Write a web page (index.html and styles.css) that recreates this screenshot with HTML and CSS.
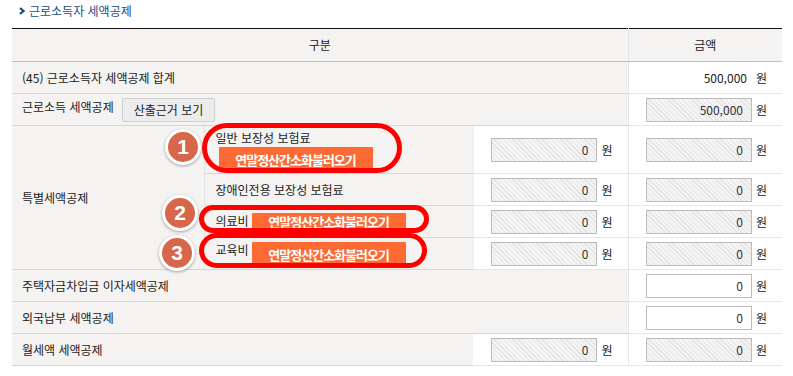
FILE: index.html
```html
<!DOCTYPE html>
<html lang="ko">
<head>
<meta charset="utf-8">
<title>근로소득자 세액공제</title>
<link rel="stylesheet" href="styles.css">
</head>
<body>
<div class="page">
  <h2 class="title">
    <svg class="arrow" width="6" height="8" viewBox="0 0 6 8"><path d="M1 1 L4.5 4 L1 7" fill="none" stroke="#1d4b80" stroke-width="2.2"/></svg>
    <span>근로소득자 세액공제</span>
  </h2>
  <table class="grid">
    <colgroup><col class="c1"><col class="c2"><col class="c3"><col class="c4"></colgroup>
    <thead>
      <tr><th colspan="3" class="hd hd-l">구분</th><th class="hd">금액</th></tr>
    </thead>
    <tbody>
      <tr class="r">
        <th colspan="3" class="lb lb-end">(45) 근로소득자 세액공제 합계</th>
        <td class="amt"><span class="val">500,000</span><span class="won">원</span></td>
      </tr>
      <tr class="r">
        <th colspan="3" class="lb lb-end"><span class="lbl-up">근로소득 세액공제</span><button class="btn-g">산출근거 보기</button></th>
        <td class="amt"><input class="fld hatch" value="500,000" readonly><span class="won">원</span></td>
      </tr>
      <tr class="r-tall">
        <th rowspan="4" class="lb grp">특별세액공제</th>
        <th class="sub sub-stack"><div class="sub-t">일반 보장성 보험료</div><button class="btn-o btn-o-block">연말정산간소화불러오기</button></th>
        <td class="amt amt-mid"><input class="fld hatch" value="0" readonly><span class="won">원</span></td>
        <td class="amt"><input class="fld hatch" value="0" readonly><span class="won">원</span></td>
      </tr>
      <tr class="r">
        <th class="sub">장애인전용 보장성 보험료</th>
        <td class="amt amt-mid"><input class="fld hatch" value="0" readonly><span class="won">원</span></td>
        <td class="amt"><input class="fld hatch" value="0" readonly><span class="won">원</span></td>
      </tr>
      <tr class="r">
        <th class="sub sub-inline sub-med"><span class="sub-l">의료비</span><button class="btn-o">연말정산간소화불러오기</button></th>
        <td class="amt amt-mid"><input class="fld hatch" value="0" readonly><span class="won">원</span></td>
        <td class="amt"><input class="fld hatch" value="0" readonly><span class="won">원</span></td>
      </tr>
      <tr class="r">
        <th class="sub sub-inline"><span class="sub-l">교육비</span><button class="btn-o">연말정산간소화불러오기</button></th>
        <td class="amt amt-mid"><input class="fld hatch" value="0" readonly><span class="won">원</span></td>
        <td class="amt"><input class="fld hatch" value="0" readonly><span class="won">원</span></td>
      </tr>
      <tr class="r">
        <th colspan="3" class="lb lb-end">주택자금차입금 이자세액공제</th>
        <td class="amt"><input class="fld" value="0"><span class="won">원</span></td>
      </tr>
      <tr class="r">
        <th colspan="3" class="lb lb-end">외국납부 세액공제</th>
        <td class="amt"><input class="fld" value="0"><span class="won">원</span></td>
      </tr>
      <tr class="r">
        <th colspan="2" class="lb">월세액 세액공제</th>
        <td class="amt amt-mid"><input class="fld hatch" value="0" readonly><span class="won">원</span></td>
        <td class="amt"><input class="fld hatch" value="0" readonly><span class="won">원</span></td>
      </tr>
    </tbody>
  </table>

  <div class="oval oval-1"></div>
  <div class="oval oval-2"></div>
  <div class="oval oval-3"></div>
  <div class="badge badge-1">1</div>
  <div class="badge badge-2">2</div>
  <div class="badge badge-3">3</div>
</div>
</body>
</html>
```
FILE: styles.css
```css
* { box-sizing: border-box; }
html, body { margin: 0; padding: 0; background: #fff; }
body {
  font-family: "Noto Sans CJK KR", "Noto Sans", sans-serif;
  font-size: 12px;
  color: #222;
}
.page {
  position: relative;
  width: 793px;
  height: 376px;
  overflow: hidden;
}
.title {
  margin: 0;
  height: 28px;
  padding: 0 0 6px 19px;
  display: flex;
  align-items: center;
  gap: 4px;
  font-size: 12px;
  font-weight: normal;
  line-height: 16px;
  color: #1a4a82;
}
.arrow { display: block; }

.grid {
  margin-left: 12px;
  width: 770px;
  border-collapse: collapse;
  table-layout: fixed;
  border-top: 1px solid #111;
}
.c1 { width: 192px; }
.c2 { width: 269px; }
.c3 { width: 155px; }
.c4 { width: 154px; }

.grid th, .grid td {
  padding: 0;
  font-weight: normal;
  line-height: 16px;
}
.hd {
  height: 33px;
  background: #f4f3f1;
  text-align: center;
  color: #222;
  border-bottom: 1px solid #bcbcbc;
}
.hd-l { border-right: 1px solid #e2e2e2; }

.r > th, .r > td { height: 32px; }
.r-tall > th, .r-tall > td { height: 48px; }

.lb {
  background: #f4f3f1;
  text-align: left;
  padding-left: 10px !important;
  color: #222;
  border-bottom: 1px solid #d6d6d6;
}
.lb-end { border-right: 1px solid #e6e6e6; }
.grp { border-right: 1px solid #e2e2e2; }

.sub {
  background: #f4f3f1;
  text-align: left;
  padding-left: 11px !important;
  color: #222;
  border-bottom: 1px solid #d6d6d6;
  border-right: 1px solid #ececec;
}
.sub-stack { padding-top: 2px !important; }
.sub-t { line-height: 16px; }
.sub-inline {
  vertical-align: top;
  padding-top: 4px !important;
  white-space: nowrap;
}
.sub-l { display: inline-block; vertical-align: top; }
.sub-med { padding-top: 7px !important; }
.sub-med .btn-o { height: 17px; }

.amt {
  background: #fff;
  text-align: right;
  padding-right: 15px !important;
  white-space: nowrap;
  border-bottom: 1px solid #e6e6e6;
  border-left: 1px solid #e6e6e6;
}
.amt-mid { border-left: none; }
.val { margin-right: 9px; vertical-align: middle; }
.won { display: inline-block; vertical-align: middle; color: #222; }

.fld {
  width: 106px;
  height: 24px;
  margin: 0 4px 0 0;
  padding: 0 8px 0 4px;
  border: 1px solid #bbb;
  border-radius: 0;
  background: #fff;
  font-family: "Noto Sans CJK KR", "Noto Sans", sans-serif;
  font-size: 12px;
  color: #333;
  text-align: right;
  vertical-align: middle;
  outline: none;
}
.hatch {
  background: repeating-linear-gradient(45deg, #f4f4f4 0 2.4px, #e2e2e2 2.4px 3.4px);
}

.btn-g {
  display: inline-block;
  vertical-align: middle;
  margin-left: 8px;
  height: 24px;
  padding: 0 11px;
  border: 1px solid #cfcfcf;
  border-radius: 2px;
  background: #ececec;
  font-family: "Noto Sans CJK KR", "Noto Sans", sans-serif;
  font-size: 12px;
  color: #222;
  line-height: 22px;
}
.lbl-up { vertical-align: middle; position: relative; top: -3px; }

.btn-o {
  display: inline-flex;
  align-items: center;
  justify-content: center;
  vertical-align: top;
  margin-left: 3px;
  height: 25px;
  width: 154px;
  padding: 0;
  border: none;
  border-radius: 1px;
  background: #fd6a34;
  box-shadow: inset 0 -1px 0 #d9572a;
  font-family: "Noto Sans CJK KR", "Noto Sans", sans-serif;
  font-size: 13px;
  font-weight: bold;
  letter-spacing: -1px;
  color: #fff;
  line-height: 1;
}
.btn-o-block { display: flex; margin-top: 1px; margin-left: 3px; }

.oval {
  position: absolute;
  border: 5px solid #f00;
  border-radius: 999px;
}
.oval-1 { left: 202px; top: 123px; width: 200px; height: 50px; border-radius: 26px; }
.oval-2 { left: 199px; top: 205px; width: 230px; height: 28px; }
.oval-3 { left: 199px; top: 233px; width: 228px; height: 35px; }

.badge {
  position: absolute;
  width: 36px;
  height: 36px;
  border-radius: 50%;
  border: 3px solid #fff;
  background: #d8664a;
  box-shadow: 0 1px 3px rgba(0,0,0,0.35);
  color: #fff;
  font-family: "Liberation Sans", Arial, sans-serif;
  font-weight: bold;
  font-size: 21px;
  display: flex;
  align-items: center;
  justify-content: center;
}
.badge-1 { left: 165px; top: 129px; }
.badge-2 { left: 162px; top: 195px; }
.badge-3 { left: 159px; top: 235px; }
```
